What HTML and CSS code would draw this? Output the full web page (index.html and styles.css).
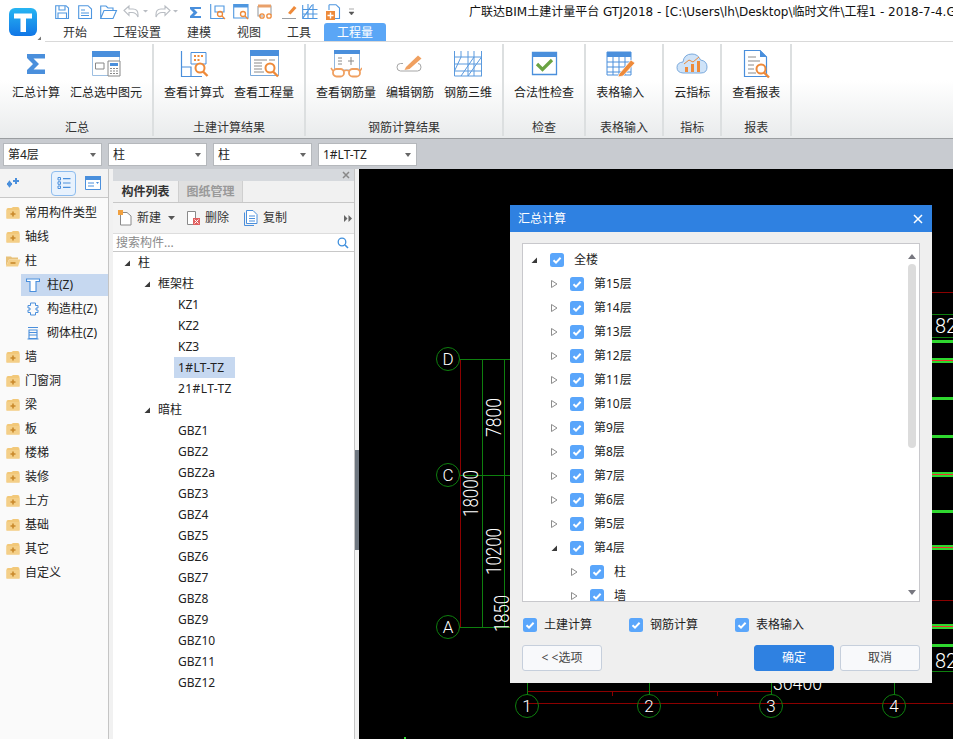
FILE: index.html
```html
<!DOCTYPE html>
<html lang="zh-CN">
<head>
<meta charset="utf-8">
<title>广联达BIM土建计量平台 GTJ2018</title>
<link rel="stylesheet" href="styles.css">
</head>
<body>
<svg class="defs" width="0" height="0">
  <symbol id="cb" viewBox="0 0 14 14"><rect width="14" height="14" rx="2.5" fill="#5aa6fb"/><path d="M3.5 7.2 6 9.6 10.6 4.8" fill="none" stroke="#fff" stroke-width="2"/></symbol>
  <symbol id="open" viewBox="0 0 10 10"><path d="M2.5 1.5 8 5 2.5 8.5Z" fill="#fff" stroke="#8d8d8d"/></symbol>
  <symbol id="down" viewBox="0 0 10 10"><path d="M8 2.5V8H2.5Z" fill="#3a3a3a"/></symbol>
  <symbol id="fold" viewBox="0 0 15 14"><path d="M1 3.5Q1 2 2.500 2H6L7.500 1H12Q14 1 14 3V12.500H1Z" fill="#f2c879"/><path d="M1 4H14V12.500H1Z" fill="#f4cf88"/><path d="M7.500 5.500V10.500M5 8H10" stroke="#c9892c" stroke-width="1.600"/></symbol>
  <symbol id="foldo" viewBox="0 0 16 14"><path d="M1 2.500H6L7 3.500H13V5.500H4L1 12.500Z" fill="#e8c179"/><path d="M4 5.500H15.500L13 12.500H1Z" fill="#f4cf88"/><path d="M5.500 9H10.500" stroke="#c9892c" stroke-width="1.600"/></symbol>
</svg>
<div class="app">
  <header class="top">
    <div class="logo">
      <svg width="45" height="41" viewBox="0 0 45 41"><defs><linearGradient id="lg" x1="0" y1="0" x2="0" y2="1"><stop offset="0" stop-color="#27b5f2"/><stop offset="1" stop-color="#1176e6"/></linearGradient></defs><rect x="9" y="8" width="28" height="28" rx="6" fill="url(#lg)"/><path d="M14 13.500H32V18.500H26V32H20.500V18.500H14Z" fill="#fff"/><path d="M41 36.500V40H37.500Z" fill="#777"/></svg>
    </div>
    <div class="top-main">
      <div class="qat">
        <svg width="300" height="18" viewBox="55 2 300 18">
          <g fill="none" stroke="#4f97e0" stroke-width="1.100">
            <path d="M55.700 4.700H66L68.500 7V17.500H55.700ZM59 4.700V9H65V4.700M58 17.500V12H66.500V17.500"/>
            <path d="M78.700 4.700H88L91.500 8V17.500H78.700ZM81 9H85M81 12H89M81 14.500H89"/>
            <path d="M100.700 17.500V5H106L108 7H113V9.500M100.700 17.500 104 9.500H116.500L113 17.500Z"/>
            <path d="M124 9.500 129 5V8H133Q138 8 138 13.500V16Q136 11.500 132 11.500H129V14.500Z" stroke="#b9bdc3"/>
            <path d="M170 9.500 165 5V8H161Q156 8 156 13.500V16Q158 11.500 162 11.500H165V14.500Z" stroke="#b9bdc3"/>
            <path d="M210.700 3V17.500H224M215 5H224V11H215Z"/>
            <path d="M233.700 3.500H248V17H233.700Z"/>
            <path d="M258 5H271V14M258 5V15H263" stroke="#9a9ea3"/>
            <path d="M302.700 4V17.500H317.500M302.700 8.500H317.500M302.700 13H317.500M308 3V17.500M313 3V17.500M303 17 312 4"/>
            <path d="M329 3.700H336L339.500 7V17.500H335M329 3.700V9"/>
          </g>
          <path d="M190 6H201V8H194L197.500 11.500 194 15H201V17H190V15L193.500 11.500 190 8Z" fill="#4a8fdc"/>
          <path d="M233.700 3.500H248V6.500H233.700Z" fill="#4f97e0"/>
          <path d="M258 3.500H271V6.500H258Z" fill="#e9a06a"/>
          <g fill="none" stroke="#ee8a3a" stroke-width="1.300"><circle cx="220" cy="13" r="2.500"/><path d="M222 15 225 18"/><circle cx="243" cy="13" r="2.500"/><path d="M245 15 248 18"/><circle cx="262" cy="15" r="2.200"/><circle cx="269" cy="15" r="2.200"/></g>
          <path d="M288 12 294 5 296.500 7 290.500 13.500Z" fill="#ee8a3a"/>
          <path d="M282 17.500H296" stroke="#9a9ea3"/>
          <rect x="326" y="10" width="9" height="9" fill="#ee8a3a"/><path d="M330.500 11.500V17.500M327.500 14.500H333.500" stroke="#fff" stroke-width="1.400"/>
          <path d="M143 9H148L145.500 11.500ZM173 9H178L175.500 11.500Z" fill="#b9bdc3"/>
          <path d="M349 8H354M349 11H354L351.500 14Z" fill="#555" stroke="#555" stroke-width=".5"/>
        </svg>
        <div class="title">广联达BIM土建计量平台 GTJ2018 - [C:\Users\lh\Desktop\临时文件\工程1 - 2018-7-4.GTJ]</div>
      </div>
      <nav class="tabs">
        <span class="tab">开始</span><span class="tab">工程设置</span><span class="tab">建模</span><span class="tab">视图</span><span class="tab">工具</span><span class="tab tab-on">工程量</span>
      </nav>
    </div>
  </header>

  <section class="ribbon">
    <div class="group first">
      <div class="btns">
        <div class="rbtn"><svg class="ri" viewBox="0 0 32 32"><path d="M7 6H25V10.500H13.500L19 16 13.500 21.500H25V26H7V22L13 16 7 10Z" fill="#4a8fdc"/></svg><span>汇总计算</span></div>
        <div class="rbtn"><svg class="ri" viewBox="0 0 32 32"><path d="M2.500 3.500H29.500V27.500H2.500Z" fill="#fff" stroke="#9dbfe2"/><path d="M2 3H30V9H2Z" fill="#4a8fdc"/><path d="M5.500 15H14V21H5.500Z" fill="none" stroke="#888"/><path d="M18 13H30V28H18Z" fill="#fff" stroke="#888"/><path d="M20 15H28V18H20Z" fill="#4a8fdc"/><path d="M20 20.500H28M20 23H28M20 25.500H28" stroke="#888" stroke-dasharray="2 1"/></svg><span>汇总选中图元</span></div>
      </div>
      <div class="glabel">汇总</div>
    </div>
    <div class="group">
      <div class="btns">
        <div class="rbtn"><svg class="ri" viewBox="0 0 32 32"><path d="M3.500 3V28.500H24M3.500 19H13V28.500" fill="none" stroke="#4a8fdc" stroke-width="1.200"/><path d="M13 4.500H28V16H13Z" fill="#fff" stroke="#4a8fdc"/><path d="M16 7H18V9H16ZM19.500 7H21.500V9H19.500ZM23 7H25V9H23ZM16 11H18V13H16ZM19.500 11H21.500V13H19.500Z" fill="#ee8a3a"/><circle cx="22" cy="20" r="4.500" fill="#fff" stroke="#ee8a3a" stroke-width="2"/><path d="M25 23.500 29.500 28" stroke="#ee8a3a" stroke-width="2.400"/></svg><span>查看计算式</span></div>
        <div class="rbtn"><svg class="ri" viewBox="0 0 32 32"><path d="M2.500 3.500H30.500V27.500H2.500Z" fill="#fff" stroke="#7ba9da"/><path d="M2 2H31V8H2Z" fill="#4a8fdc"/><path d="M6 12H19M6 15H14M6 18H14M6 21H14M6 24H16M21 12H27" stroke="#8a8a8a"/><circle cx="22" cy="20" r="4.500" fill="#fff" stroke="#ee8a3a" stroke-width="2"/><path d="M25 23.500 30 28.500" stroke="#ee8a3a" stroke-width="2.400"/></svg><span>查看工程量</span></div>
      </div>
      <div class="glabel">土建计算结果</div>
    </div>
    <div class="group">
      <div class="btns">
        <div class="rbtn"><svg class="ri" viewBox="0 0 32 32"><path d="M4.500 3.500H29.500V22H4.500Z" fill="#fff" stroke="#8fb6df"/><path d="M4 2H30V6H4Z" fill="#4a8fdc"/><path d="M8 10H12M8 13H12M8 16H12M18 13H24M21 9V17" stroke="#8a8a8a"/><g fill="#fff" stroke="#f0a060" stroke-width="1.800"><rect x="3" y="21" width="11" height="7.500" rx="3.500"/><rect x="19" y="21" width="11" height="7.500" rx="3.500"/></g><path d="M14 23Q16.500 21.500 19 23M3 23 1 20M30 23 32 20" fill="none" stroke="#f0a060" stroke-width="1.500"/></svg><span>查看钢筋量</span></div>
        <div class="rbtn"><svg class="ri" viewBox="0 0 32 32"><path d="M9 15.500H6.500Q3 15.500 3 19.200T6.500 23H23.500Q27 23 27 19.200T24 15.500" fill="none" stroke="#a5a5a5"/><path d="M12 19 24 7.500 27.500 10.500 15.500 21 10.500 22Z" fill="#f0a060"/></svg><span>编辑钢筋</span></div>
        <div class="rbtn"><svg class="ri" viewBox="0 0 32 32"><path d="M2.500 3V28M29.500 3V28M2 9H30M2 16H30M2 23H30M2.500 28H30M9 3V9M16 3V28M22 3V28M2.500 23 9 9M9 28 22 9M16 28 29.500 9" fill="none" stroke="#5b9ade"/></svg><span>钢筋三维</span></div>
      </div>
      <div class="glabel">钢筋计算结果</div>
    </div>
    <div class="group">
      <div class="btns">
        <div class="rbtn"><svg class="ri" viewBox="0 0 32 32"><path d="M4.500 4.500H28.500V26.500H4.500Z" fill="#fff" stroke="#4a8fdc" stroke-width="1.300"/><path d="M4 4H29V9H4Z" fill="#4a8fdc"/><path d="M9 16 14.500 21.500 24 12" fill="none" stroke="#6aa343" stroke-width="3.200"/></svg><span>合法性检查</span></div>
      </div>
      <div class="glabel">检查</div>
    </div>
    <div class="group fixed-w">
      <div class="btns">
        <div class="rbtn"><svg class="ri" viewBox="0 0 32 32"><path d="M3 4H27V27H3Z" fill="#fff" stroke="#4a8fdc"/><path d="M3 4H27V9H3Z" fill="#4a8fdc"/><path d="M3 14H27M3 19H27M3 24H27M9 9V27M15 9V27M21 9V27" stroke="#4a8fdc"/><path d="M15 26 27 12 31 15 19 28 14 29Z" fill="#ee8a3a" stroke="#fff" stroke-width=".7"/></svg><span>表格输入</span></div>
      </div>
      <div class="glabel">表格输入</div>
    </div>
    <div class="group">
      <div class="btns">
        <div class="rbtn"><svg class="ri" viewBox="0 0 32 32"><path d="M7 25Q1 24.500 1 19.500T7 14Q8 6 16 6 22 6 24.500 12 31 13 31 19T25 25Z" fill="#cfe3f8" stroke="#7aa9dc"/><path d="M9 24V19H12V24ZM15 24V16H18V24ZM21 24V13H24V24Z" fill="#ee8a3a"/><path d="M8 16 13 12 17 14 23 9" fill="none" stroke="#ee8a3a"/></svg><span>云指标</span></div>
      </div>
      <div class="glabel">指标</div>
    </div>
    <div class="group">
      <div class="btns">
        <div class="rbtn"><svg class="ri" viewBox="0 0 32 32"><path d="M4.500 2.500H20L26.500 9V28.500H4.500Z" fill="#fff" stroke="#4a8fdc" stroke-width="1.200"/><path d="M20 2 27 9H20Z" fill="#4a8fdc"/><path d="M8 9H16M8 13H20M8 17H14M8 21H14M8 25H16" stroke="#8a8a8a"/><circle cx="21" cy="21" r="4.500" fill="#fff" stroke="#ee8a3a" stroke-width="2"/><path d="M24 24.500 29 29.500" stroke="#ee8a3a" stroke-width="2.400"/></svg><span>查看报表</span></div>
      </div>
      <div class="glabel">报表</div>
    </div>
  </section>

  <section class="selects">
    <div class="sel">第4层</div><div class="sel">柱</div><div class="sel">柱</div><div class="sel">1#LT-TZ</div>
  </section>

  <main class="work">
    <aside class="side">
      <div class="side-tools">
        <svg class="st-add" width="14" height="12" viewBox="0 0 14 12"><path d="M3.500 5 5 7 3.500 9 2 7ZM1 7H6M10 1V7M7 4H13" stroke="#4a8fdc" stroke-width="2" fill="none"/></svg>
        <div class="st-on"><svg width="14" height="14" viewBox="0 0 14 14"><path d="M1 1.500H3.500V4H1ZM1 5.800H3.500V8.300H1ZM1 10H3.500V12.500H1Z" fill="none" stroke="#4a8fdc"/><path d="M6 2.700H13.500M6 7H13.500M6 11.300H13.500" stroke="#4a8fdc" stroke-width="1.200"/></svg></div>
        <svg class="st-win" width="16" height="14" viewBox="0 0 16 14"><path d="M.5.500H15.500V13.500H.5Z" fill="#fff" stroke="#4a8fdc"/><path d="M0 0H16V4H0Z" fill="#4a8fdc"/><path d="M3 7H9M3 10H9" stroke="#4a8fdc"/><path d="M11 6H14L12.500 8Z" fill="#4a8fdc"/></svg>
      </div>
      <ul class="side-list">
        <li class="sr"><svg class="fi"><use href="#fold"/></svg>常用构件类型</li>
        <li class="sr"><svg class="fi"><use href="#fold"/></svg>轴线</li>
        <li class="sr"><svg class="fi"><use href="#foldo"/></svg>柱</li>
        <li class="sr sub on"><svg class="si" viewBox="0 0 14 14"><path d="M.5 1H13.500V3.500H10V13.500H4V3.500H.5Z" fill="#fff" stroke="#4a8fdc" stroke-width="1.100"/></svg>柱(Z)</li>
        <li class="sr sub"><svg class="si" viewBox="0 0 14 14"><path d="M4.500 1H9.500V3.500H12V6H10V8H12V10.500H9.500V13H4.500V10.500H2V8H4V6H2V3.500H4.500Z" fill="none" stroke="#4a8fdc"/></svg>构造柱(Z)</li>
        <li class="sr sub"><svg class="si" viewBox="0 0 14 14"><path d="M2 1.500H12M3 4H11V12.500H3ZM3 6.500H11M3 9H11M1.500 13H12.500" fill="none" stroke="#4a8fdc" stroke-width="1.100"/></svg>砌体柱(Z)</li>
        <li class="sr"><svg class="fi"><use href="#fold"/></svg>墙</li>
        <li class="sr"><svg class="fi"><use href="#fold"/></svg>门窗洞</li>
        <li class="sr"><svg class="fi"><use href="#fold"/></svg>梁</li>
        <li class="sr"><svg class="fi"><use href="#fold"/></svg>板</li>
        <li class="sr"><svg class="fi"><use href="#fold"/></svg>楼梯</li>
        <li class="sr"><svg class="fi"><use href="#fold"/></svg>装修</li>
        <li class="sr"><svg class="fi"><use href="#fold"/></svg>土方</li>
        <li class="sr"><svg class="fi"><use href="#fold"/></svg>基础</li>
        <li class="sr"><svg class="fi"><use href="#fold"/></svg>其它</li>
        <li class="sr"><svg class="fi"><use href="#fold"/></svg>自定义</li>
      </ul>
    </aside>
    <section class="panel">
      <div class="p-strip"><svg width="8" height="8" viewBox="0 0 8 8"><path d="M1 1 7 7M7 1 1 7" stroke="#888" stroke-width="1.500"/></svg></div>
      <div class="p-tabs"><span class="ptab ptab-on">构件列表</span><span class="ptab">图纸管理</span></div>
      <div class="p-tools">
        <svg class="pi" viewBox="0 0 14 16"><path d="M2.500 2.500H9L13 6V15H2.500Z" fill="#fff" stroke="#8a8a8a"/><path d="M0 0H5V5H0Z" fill="#f0a040"/></svg><span>新建</span>
        <svg class="p-arrow" width="7" height="4" viewBox="0 0 7 4"><path d="M0 0H7L3.500 4Z" fill="#555"/></svg>
        <svg class="pi del" viewBox="0 0 14 16"><path d="M1.500 1.500H9.500V14.500H1.500Z" fill="#fff" stroke="#8a8a8a"/><path d="M7 8H14V15H7Z" fill="#e06060"/><path d="M8.500 9.500 12.500 13.500M12.500 9.500 8.500 13.500" stroke="#fff"/></svg><span>删除</span>
        <svg class="pi copy" viewBox="0 0 14 16"><path d="M.5 2.500V15.500H10" fill="none" stroke="#4a8fdc"/><path d="M2.500.5H9L13 4.500V13.500H2.500Z" fill="#fff" stroke="#4a8fdc"/><path d="M5 6H11M5 8.500H11M5 11H11" stroke="#4a8fdc"/></svg><span>复制</span>
        <svg class="p-more" width="8" height="7" viewBox="0 0 8 7"><path d="M0 0 3.500 3.500 0 7ZM4.500 0 8 3.500 4.500 7Z" fill="#666"/></svg>
      </div>
      <div class="p-search"><span>搜索构件...</span><svg width="12" height="12" viewBox="0 0 12 12"><circle cx="5" cy="5" r="3.800" fill="none" stroke="#3f8fdc" stroke-width="1.300"/><path d="M8 8 11 11" stroke="#3f8fdc" stroke-width="1.600"/></svg></div>
      <ul class="ptree">
        <li class="pt l0"><svg class="ar"><use href="#down"/></svg>柱</li>
        <li class="pt l1"><svg class="ar"><use href="#down"/></svg>框架柱</li>
        <li class="pt l2"><span class="pv">KZ1</span></li>
        <li class="pt l2"><span class="pv">KZ2</span></li>
        <li class="pt l2"><span class="pv">KZ3</span></li>
        <li class="pt l2"><span class="pv pw pon">1#LT-TZ</span></li>
        <li class="pt l2"><span class="pv pw">21#LT-TZ</span></li>
        <li class="pt l1"><svg class="ar"><use href="#down"/></svg>暗柱</li>
        <li class="pt l2"><span class="pv">GBZ1</span></li>
        <li class="pt l2"><span class="pv">GBZ2</span></li>
        <li class="pt l2"><span class="pv">GBZ2a</span></li>
        <li class="pt l2"><span class="pv">GBZ3</span></li>
        <li class="pt l2"><span class="pv">GBZ4</span></li>
        <li class="pt l2"><span class="pv">GBZ5</span></li>
        <li class="pt l2"><span class="pv">GBZ6</span></li>
        <li class="pt l2"><span class="pv">GBZ7</span></li>
        <li class="pt l2"><span class="pv">GBZ8</span></li>
        <li class="pt l2"><span class="pv">GBZ9</span></li>
        <li class="pt l2"><span class="pv">GBZ10</span></li>
        <li class="pt l2"><span class="pv">GBZ11</span></li>
        <li class="pt l2"><span class="pv">GBZ12</span></li>
      </ul>
    </section>
    <div class="split"><div class="grip"></div></div>
    <div class="canvas">
      <svg class="cad" width="594" height="570" viewBox="359 169 594 570">
        <g fill="none" stroke="#8b0000">
          <path d="M460.500 359V627M527 691.500H771M527 703.500H953M612.500 691V696M717.500 691V696M932 292.500H953M932 600.500H953"/>
        </g>
        <g fill="none" stroke="#0e7f0e">
          <path d="M460 359.500H510M460 475.500H510M460 627.500H510M482.500 359V627M504.500 359V627M527.500 683V695M649.500 683V695M771.500 683V695M894.500 683V695M932 314.500H953M932 337.500H953M932 671.500H953"/>
          <circle cx="448" cy="359" r="11.500"/><circle cx="448" cy="475" r="11.500"/><circle cx="448" cy="627" r="11.500"/>
          <circle cx="527" cy="706" r="11.500"/><circle cx="649" cy="706" r="11.500"/><circle cx="771" cy="706" r="11.500"/><circle cx="894" cy="706" r="11.500"/>
        </g>
        <g fill="#2fd82f">
          <rect x="932" y="340" width="21" height="3"/><rect x="932" y="358" width="21" height="5"/><rect x="932" y="397" width="21" height="3"/><rect x="932" y="435" width="21" height="3"/><rect x="932" y="472" width="21" height="5"/><rect x="932" y="510" width="21" height="3"/><rect x="932" y="545" width="21" height="5"/><rect x="932" y="624" width="21" height="5"/><rect x="932" y="644" width="21" height="3"/><rect x="404" y="737" width="2" height="2"/>
        </g>
        <path d="M932 360.500H953M932 474.500H953M932 547.500H953M932 626.500H953" stroke="#f03030"/>
        <g class="cad-t">
          <text x="448" y="365" text-anchor="middle">D</text><text x="448" y="481" text-anchor="middle">C</text><text x="448" y="633" text-anchor="middle">A</text>
          <text x="527" y="712" text-anchor="middle">1</text><text x="649" y="712" text-anchor="middle">2</text><text x="771" y="712" text-anchor="middle">3</text><text x="894" y="712" text-anchor="middle">4</text>
          <text class="dim" transform="translate(501 437) rotate(-90)" textLength="39" lengthAdjust="spacingAndGlyphs">7800</text>
          <text class="dim" transform="translate(478 517) rotate(-90)" textLength="47" lengthAdjust="spacingAndGlyphs">18000</text>
          <text class="dim" transform="translate(501 575) rotate(-90)" textLength="47" lengthAdjust="spacingAndGlyphs">10200</text>
          <text class="dim" transform="translate(509 632) rotate(-90)" textLength="37" lengthAdjust="spacingAndGlyphs">1850</text>
          <text class="dim" x="773" y="690" textLength="49" lengthAdjust="spacingAndGlyphs">36400</text>
          <text class="dim" x="935" y="333">82</text><text class="dim" x="935" y="668">82</text>
        </g>
      </svg>
    </div>
  </main>

  <div class="dlg">
    <div class="dlg-head"><span>汇总计算</span><svg width="10" height="10" viewBox="0 0 10 10"><path d="M1 1 9 9M9 1 1 9" stroke="#fff" stroke-width="1.500"/></svg></div>
    <div class="dlg-body">
      <div class="dtree">
        <div class="dr d0"><svg class="da"><use href="#down"/></svg><svg class="cb"><use href="#cb"/></svg>全楼</div>
        <div class="dr d1"><svg class="da"><use href="#open"/></svg><svg class="cb"><use href="#cb"/></svg>第15层</div>
        <div class="dr d1"><svg class="da"><use href="#open"/></svg><svg class="cb"><use href="#cb"/></svg>第14层</div>
        <div class="dr d1"><svg class="da"><use href="#open"/></svg><svg class="cb"><use href="#cb"/></svg>第13层</div>
        <div class="dr d1"><svg class="da"><use href="#open"/></svg><svg class="cb"><use href="#cb"/></svg>第12层</div>
        <div class="dr d1"><svg class="da"><use href="#open"/></svg><svg class="cb"><use href="#cb"/></svg>第11层</div>
        <div class="dr d1"><svg class="da"><use href="#open"/></svg><svg class="cb"><use href="#cb"/></svg>第10层</div>
        <div class="dr d1"><svg class="da"><use href="#open"/></svg><svg class="cb"><use href="#cb"/></svg>第9层</div>
        <div class="dr d1"><svg class="da"><use href="#open"/></svg><svg class="cb"><use href="#cb"/></svg>第8层</div>
        <div class="dr d1"><svg class="da"><use href="#open"/></svg><svg class="cb"><use href="#cb"/></svg>第7层</div>
        <div class="dr d1"><svg class="da"><use href="#open"/></svg><svg class="cb"><use href="#cb"/></svg>第6层</div>
        <div class="dr d1"><svg class="da"><use href="#open"/></svg><svg class="cb"><use href="#cb"/></svg>第5层</div>
        <div class="dr d1"><svg class="da"><use href="#down"/></svg><svg class="cb"><use href="#cb"/></svg>第4层</div>
        <div class="dr d2"><svg class="da"><use href="#open"/></svg><svg class="cb"><use href="#cb"/></svg>柱</div>
        <div class="dr d2"><svg class="da"><use href="#open"/></svg><svg class="cb"><use href="#cb"/></svg>墙</div>
        <div class="scroll">
          <svg width="8" height="5" viewBox="0 0 8 5"><path d="M4 0 8 5H0Z" fill="#77777f"/></svg>
          <div class="thumb"></div>
          <svg class="sc-down" width="8" height="5" viewBox="0 0 8 5"><path d="M0 0H8L4 5Z" fill="#77777f"/></svg>
        </div>
      </div>
      <div class="dchecks">
        <label class="dc"><svg class="cb"><use href="#cb"/></svg>土建计算</label>
        <label class="dc"><svg class="cb"><use href="#cb"/></svg>钢筋计算</label>
        <label class="dc"><svg class="cb"><use href="#cb"/></svg>表格输入</label>
      </div>
      <div class="dfoot">
        <button class="b">&lt; &lt;选项</button>
        <button class="b b-pri">确定</button>
        <button class="b">取消</button>
      </div>
    </div>
  </div>
</div>
</body>
</html>
```

FILE: styles.css
```css
* { box-sizing: border-box; }
html, body { margin: 0; padding: 0; background: #000; }
body { font: 12px/18px "Noto Sans", "Noto Sans CJK SC", sans-serif; color: #222; }
ul { list-style: none; margin: 0; padding: 0; }
.defs { position: absolute; }
.app { position: relative; width: 953px; height: 739px; overflow: hidden; display: flex; flex-direction: column; }

.top { height: 42px; flex: none; display: flex; background: #fff; }
.logo { width: 45px; height: 42px; flex: none; }
.logo svg { display: block; }
.top-main { flex: 1; min-width: 0; border-bottom: 1px solid #d9d9d9; }
.qat { height: 23px; display: flex; align-items: center; padding-left: 10px; overflow: hidden; white-space: nowrap; }
.qat svg { flex: none; display: block; }
.title { margin-left: 114px; color: #111; flex: none; line-height: 20px; font-family: "DejaVu Sans", "Noto Sans CJK SC", sans-serif; }
.tabs { display: flex; padding-left: 5px; height: 18px; }
.tab { padding: 1px 13px 0; line-height: 18px; color: #333; }
.tab-on { background: #5aa6f6; color: #fff; border-radius: 3px 3px 0 0; }

.ribbon { height: 97px; flex: none; display: flex; background: linear-gradient(#fff 0, #fff 40%, #e9ebec 100%); border-bottom: 1px solid #9a9da0; }
.group { display: flex; flex-direction: column; margin-top: 2px; padding: 4px 10px 0; border-right: 2px solid #dcdfe0; height: 92px; }
.first { padding-left: 12px; }
.fixed-w { width: 78px; }
.btns { display: flex; gap: 10px; height: 71px; flex: none; }
.rbtn { display: flex; flex-direction: column; align-items: center; white-space: nowrap; color: #222; }
.ri { width: 32px; height: 32px; display: block; margin-bottom: 4px; }
.glabel { text-align: center; white-space: nowrap; color: #333; line-height: 18px; flex: none; }

.selects { height: 30px; flex: none; display: flex; gap: 6px; padding: 4px 0 0 3px; background: #c8cbd0; }
.sel { width: 99px; height: 23px; line-height: 22px; padding-left: 4px; background: #fff; border: 1px solid #b5b8bc; position: relative; color: #222; }
.sel::after { content: ""; position: absolute; right: 5px; top: 9px; border: 3.500px solid transparent; border-top: 4px solid #666; border-bottom: 0; }

.work { flex: 1; min-height: 0; display: flex; background: #f1f1f1; }
.side { width: 109px; flex: none; background: #fafafa; border-right: 1px solid #c4c4c4; }
.side-tools { height: 29px; display: flex; align-items: center; border-bottom: 1px solid #c8c8c8; background: #f3f3f3; padding-left: 6px; }
.st-add { flex: none; }
.st-on { width: 25px; height: 25px; margin-left: 31px; border: 1px solid #8dbcee; border-radius: 4px; background: #e8f2fd; display: flex; align-items: center; justify-content: center; }
.st-win { margin-left: 9px; flex: none; }
.side-list { padding-top: 3px; }
.sr { height: 24px; display: flex; align-items: center; padding-left: 5px; white-space: nowrap; }
.fi { width: 16px; height: 14px; margin-right: 4px; flex: none; }
.sub { margin-left: 21px; padding-left: 5px; }
.si { width: 14px; height: 14px; margin-right: 7px; flex: none; }
.on { background: #c6d8f0; height: 22px; margin-top: 1px; margin-bottom: 1px; }

.panel { width: 242px; margin-left: 4px; flex: none; background: #fff; display: flex; flex-direction: column; border-right: 1px solid #c4c4c4; }
.p-strip { height: 12px; background: #d6d9dd; display: flex; justify-content: flex-end; align-items: center; padding-right: 4px; flex: none; }
.p-tabs { height: 22px; display: flex; background: #f1f1f1; border-bottom: 1px solid #c8c8c8; flex: none; }
.ptab { width: 64px; text-align: center; line-height: 21px; color: #999; background: #e0e0e0; font-weight: 700; border-right: 1px solid #cfcfcf; }
.ptab-on { color: #333; background: #f1f1f1; width: 66px; border-right: 1px solid #cfcfcf; }
.p-tools { height: 30px; display: flex; align-items: center; background: #f3f3f3; padding-left: 5px; position: relative; flex: none; color: #333; }
.pi { width: 14px; height: 16px; margin-right: 5px; flex: none; }
.p-arrow { margin: 0 11px 0 7px; flex: none; }
.p-tools .copy { margin-left: 15px; }
.p-more { margin-left: auto; margin-right: 2px; }
.p-search { height: 19px; display: flex; align-items: center; justify-content: space-between; padding: 0 5px 0 3px; color: #8a8a8a; border-top: 1px solid #ddd; border-bottom: 1px solid #c8c8c8; flex: none; }
.ptree { flex: 1; min-height: 0; overflow: hidden; }
.pt { height: 21px; display: flex; align-items: center; white-space: nowrap; color: #222; }
.l0 { padding-left: 9px; }
.l1 { padding-left: 29px; }
.l2 { padding-left: 61px; }
.ar { width: 10px; height: 10px; margin-right: 6px; flex: none; }
.pv { padding: 0 10px 0 4px; height: 21px; line-height: 21px; }
.pw { letter-spacing: .4px; }
.pon { background: #c6d8f0; }

.split { width: 4px; flex: none; background: #f1f1f1; padding-top: 281px; }
.grip { height: 100px; background: #6f7780; }
.canvas { flex: 1; background: #000; min-width: 0; position: relative; }
.cad { display: block; }
.cad-t { fill: #fff; font: 300 17px Roboto, "Liberation Sans", sans-serif; }
.dim { font-size: 20px; }

.dlg { position: absolute; left: 510px; top: 205px; width: 422px; height: 478px; background: #efefef; display: flex; flex-direction: column; }
.dlg-head { height: 27px; background: #2f81e1; color: #fff; display: flex; align-items: center; justify-content: space-between; padding: 0 9px 0 8px; flex: none; }
.dlg-body { padding: 11px 12px 0; }
.dtree { height: 359px; background: #fff; border: 1px solid #c8c8cc; padding-top: 4px; overflow: hidden; position: relative; }
.dr { height: 24px; display: flex; align-items: center; color: #222; white-space: nowrap; }
.d0 { padding-left: 6px; }
.d1 { padding-left: 26px; }
.d2 { padding-left: 46px; }
.da { width: 10px; height: 10px; flex: none; }
.cb { width: 14px; height: 14px; margin: 0 10px 0 11px; flex: none; }
.scroll { position: absolute; right: 3px; top: 10px; bottom: 6px; width: 8px; display: flex; flex-direction: column; align-items: center; }
.scroll svg { flex: none; display: block; }
.thumb { width: 8px; height: 184px; margin-top: 5px; border-radius: 4px; background: #dcdcdc; flex: none; }
.sc-down { margin-top: auto; }
.dchecks { display: flex; height: 43px; align-items: center; padding-top: 2px; }
.dc { display: flex; align-items: center; color: #222; width: 106px; }
.dc .cb { margin: 0 7px 0 1px; }
.dfoot { display: flex; gap: 6px; }
.b { width: 80px; height: 26px; border: 1px solid #c6cfdc; border-radius: 3px; background: #f8f9fb; font: inherit; color: #444; padding: 0; }
.b:first-child { margin-right: auto; }
.b-pri { background: #2f81e1; border-color: #2f81e1; color: #fff; }
```
